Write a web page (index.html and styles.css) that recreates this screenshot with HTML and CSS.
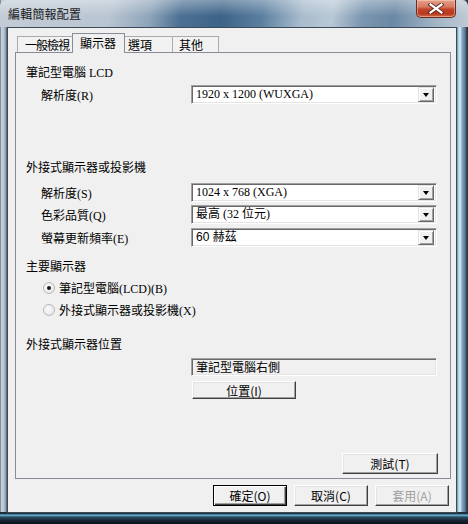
FILE: index.html
```html
<!DOCTYPE html>
<html lang="zh-Hant">
<head>
<meta charset="utf-8">
<title>編輯簡報配置</title>
<link rel="stylesheet" href="styles.css">
</head>
<body>
<div class="window">
  <div class="titlebar">
    <span class="title">編輯簡報配置</span>
    <div class="close">
      <svg width="16" height="11" viewBox="0 0 16 11">
        <path d="M2.5 1.5 L13.5 9.5 M13.5 1.5 L2.5 9.5" stroke="#5a2418" stroke-width="4" stroke-linecap="square" fill="none"/>
        <path d="M2.5 1.5 L13.5 9.5 M13.5 1.5 L2.5 9.5" stroke="#ffffff" stroke-width="2.2" stroke-linecap="square" fill="none"/>
      </svg>
    </div>
  </div>
  <div class="client">
    <div class="tabs">
      <div class="tab first">一般檢視</div>
      <div class="tab active">顯示器</div>
      <div class="tab third">選項</div>
      <div class="tab fourth">其他</div>
    </div>
    <div class="panel">
      <div class="heading h-lcd">筆記型電腦 LCD</div>
      <div class="row r-lcd">
        <span class="label">解析度(R)</span>
        <div class="combo"><span class="val">1920 x 1200 (WUXGA)</span><span class="arrow"></span></div>
      </div>

      <div class="heading h-ext">外接式顯示器或投影機</div>
      <div class="row r-s">
        <span class="label">解析度(S)</span>
        <div class="combo"><span class="val">1024 x 768 (XGA)</span><span class="arrow"></span></div>
      </div>
      <div class="row r-q">
        <span class="label">色彩品質(Q)</span>
        <div class="combo"><span class="val">最高 (32 位元)</span><span class="arrow"></span></div>
      </div>
      <div class="row r-e">
        <span class="label">螢幕更新頻率(E)</span>
        <div class="combo"><span class="val sans">60 赫茲</span><span class="arrow"></span></div>
      </div>

      <div class="heading h-main">主要顯示器</div>
      <div class="radio-row r1"><span class="radio checked"></span><span>筆記型電腦(LCD)(B)</span></div>
      <div class="radio-row r2"><span class="radio"></span><span>外接式顯示器或投影機(X)</span></div>

      <div class="heading h-pos">外接式顯示器位置</div>
      <div class="readonly">筆記型電腦右側</div>
      <div class="btn pos-btn">位置(I)</div>

      <div class="btn test-btn">測試(T)</div>
    </div>
    <div class="actions">
      <div class="btn act default">確定(O)</div>
      <div class="btn act">取消(C)</div>
      <div class="btn act disabled">套用(A)</div>
    </div>
  </div>
</div>
</body>
</html>
```

FILE: styles.css
```css
* { box-sizing: border-box; }
html, body { margin: 0; padding: 0; }
body {
  width: 468px;
  height: 524px;
  overflow: hidden;
  font-family: "Liberation Serif", "Noto Sans CJK TC", serif;
  font-size: 12px;
  color: #000;
}

.window {
  width: 468px;
  height: 524px;
  display: flex;
  flex-direction: column;
  padding: 0 11px 11px 7px;
  background:
    linear-gradient(to bottom, #1b2633 0px, #22384c 2px, #6fc6e6 3px, #2a4a62 5px, #14202c 9px, #0c141c 12px) left bottom / 100% 12px no-repeat,
    linear-gradient(to right, #3e4a56 0px, #c6d2de 1px, #b4c4d4 4px, #8496a8 6px, #3a4856 7px,
      #3a4856 456px, #9cc6dc 458px, #d8f0fa 460px, #88aac4 462px, #5c7890 465px, #2c3844 467px),
    #9aaabb;
}

.titlebar {
  height: 27px;
  margin: 0 -11px 0 -7px;
  padding-left: 8px;
  display: flex;
  justify-content: space-between;
  align-items: flex-start;
  border-radius: 6px 6px 0 0;
  background:
    linear-gradient(to bottom, rgba(255,255,255,0.35), rgba(255,255,255,0) 60%),
    linear-gradient(100deg, #c3ccd6 0px, #b9c5d2 110px, #8fa5ba 150px, #4d7194 180px, #3c6388 220px, #5a7e9e 260px, #a9bccd 300px, #b8c8d6 330px, #7b96b0 360px, #6a88a4 390px, #9fb2c4 430px, #c2ccd6 468px);
}
.title {
  font-family: "Noto Sans CJK TC", sans-serif;
  font-size: 12px;
  line-height: 14px;
  margin-top: 7px;
  color: #1a1a1a;
  letter-spacing: 0.2px;
}
.close {
  width: 40px;
  height: 18px;
  margin-right: 12px;
  border: 1px solid #6b2a1e;
  border-top: none;
  border-radius: 0 0 5px 5px;
  background: linear-gradient(to bottom, #e6a18e 0%, #d77a62 40%, #c0442a 55%, #b8381e 80%, #d46a4a 100%);
  box-shadow: inset 0 0 0 1px rgba(255,220,200,0.45);
  display: flex;
  align-items: center;
  justify-content: center;
}

.client {
  flex: 1;
  border: 1px solid #3c4a58;
  background: #f0f0f0;
  display: flex;
  flex-direction: column;
}

.tabs {
  height: 24px;
  display: flex;
  align-items: flex-end;
  padding-left: 9px;
  position: relative;
  z-index: 1;
}
.tab {
  font-family: "Noto Sans CJK TC", sans-serif;
  height: 16px;
  line-height: 15px;
  border: 1px solid #a9abb0;
  border-bottom: none;
  border-left: none;
  background: #f2f2f2;
  padding: 0;
  text-align: left;
  white-space: nowrap;
}
.tab.first { border-left: 1px solid #a9abb0; width: 56px; padding-left: 7px; letter-spacing: -1px; }
.tab.third { width: 48px; padding-left: 3px; }
.tab.fourth { width: 46px; padding-left: 6px; }
.tab.active {
  height: 20px;
  margin-bottom: -1px;
  width: 53px;
  background: #f0f0f0;
  border-color: #898c95;
  border-left: 1px solid #898c95;
  line-height: 17px;
  margin-left: -1px;
  padding-left: 7px;
}

.panel {
  height: 427px;
  margin: 0 5px 0 7px;
  border: 1px solid #898c95;
  background: #f0f0f0;
  display: flex;
  flex-direction: column;
  padding: 0 0 4px 10px;
}

.heading {
  font-family: "Liberation Serif", "Noto Sans CJK TC", serif;
  height: 16px;
  line-height: 16px;
}
.h-lcd { margin-top: 12px; }
.h-ext { margin-top: 56px; }
.h-main { margin-top: 12px; }
.h-pos { margin-top: 16px; }

.row {
  display: flex;
  align-items: center;
  height: 19px;
}
.r-lcd { margin-top: 4px; }
.r-s { margin-top: 7px; }
.r-q { margin-top: 3px; }
.r-e { margin-top: 4px; }
.label {
  width: 165px;
  padding-left: 15px;
  white-space: nowrap;
}

.combo {
  width: 246px;
  height: 19px;
  background: #fff;
  border: 1px solid;
  border-color: #a0a0a0 #ffffff #ffffff #a0a0a0;
  box-shadow: inset 1px 1px 0 #696969, inset -1px -1px 0 #e3e3e3;
  display: flex;
  align-items: center;
  justify-content: space-between;
  padding: 1px 2px 1px 2px;
}
.val {
  padding-left: 2px;
  line-height: 15px;
  white-space: nowrap;
}
.val.sans { font-family: "Liberation Sans", "Noto Sans CJK TC", sans-serif; }
.arrow {
  width: 16px;
  height: 15px;
  background: #f0f0f0;
  border: 1px solid;
  border-color: #e3e3e3 #696969 #696969 #e3e3e3;
  box-shadow: inset 1px 1px 0 #fff, inset -1px -1px 0 #a0a0a0;
  position: relative;
}
.arrow::after {
  content: "";
  position: absolute;
  left: 4px;
  top: 5px;
  border-left: 3.5px solid transparent;
  border-right: 3.5px solid transparent;
  border-top: 4px solid #000;
}

.radio-row {
  display: flex;
  align-items: center;
  height: 22px;
  padding-left: 17px;
  white-space: nowrap;
}
.radio-row.r1 { margin-top: 2px; }
.radio {
  width: 12px;
  height: 12px;
  border-radius: 50%;
  background: radial-gradient(circle at 40% 40%, #fafafa, #e2e2e2);
  border: 1px solid #b8b8b8;
  margin-right: 4px;
  position: relative;
}
.radio.checked::after {
  content: "";
  position: absolute;
  left: 3px;
  top: 3px;
  width: 4px;
  height: 4px;
  border-radius: 50%;
  background: #1a1a1a;
}

.readonly {
  margin-top: 5px;
  margin-left: 165px;
  width: 246px;
  height: 18px;
  line-height: 14px;
  padding: 1px 4px;
  font-family: "Noto Sans CJK TC", sans-serif;
  border: 1px solid;
  border-color: #a0a0a0 #ffffff #ffffff #a0a0a0;
  box-shadow: inset 1px 1px 0 #696969, inset -1px -1px 0 #e3e3e3;
  background: #f0f0f0;
}

.btn {
  display: flex;
  align-items: center;
  justify-content: center;
  background: #f0f0f0;
  border: 1px solid;
  border-color: #ffffff #404040 #404040 #ffffff;
  box-shadow: inset -1px -1px 0 #a0a0a0, inset 1px 1px 0 #e3e3e3;
  font-family: "Noto Sans CJK TC", sans-serif;
  font-size: 12px;
  white-space: nowrap;
}
.pos-btn {
  margin-top: 5px;
  margin-left: 166px;
  width: 104px;
  height: 18px;
}
.test-btn {
  margin-top: auto;
  align-self: flex-end;
  margin-right: 12px;
  width: 96px;
  height: 21px;
}

.actions {
  display: flex;
  justify-content: flex-end;
  gap: 7px;
  margin-top: 6px;
  padding-right: 7px;
}
.act {
  width: 74px;
  height: 21px;
}
.act.default {
  border: 1px solid #000;
  box-shadow: inset 1px 1px 0 #fff, inset -1px -1px 0 #404040, inset -2px -2px 0 #a0a0a0;
}
.act.disabled { color: #a0a0a0; }
```
